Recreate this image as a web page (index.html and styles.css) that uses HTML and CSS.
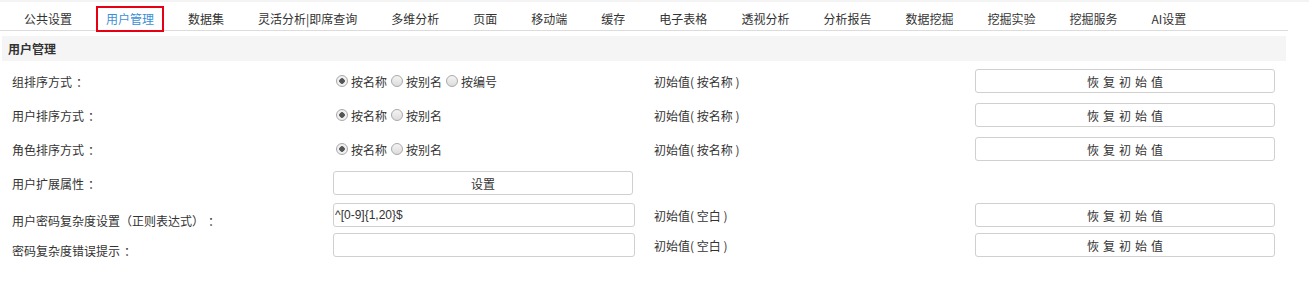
FILE: index.html
```html
<!DOCTYPE html>
<html lang="zh-CN">
<head>
  <meta charset="UTF-8" />
  <title>用户管理</title>
  <link rel="stylesheet" href="styles.css">
</head>
<body>
  <div class="tabs">
    <span class="tab">公共设置</span>
    <span class="tab active">用户管理</span>
    <span class="tab">数据集</span>
    <span class="tab">灵活分析|即席查询</span>
    <span class="tab">多维分析</span>
    <span class="tab">页面</span>
    <span class="tab">移动端</span>
    <span class="tab">缓存</span>
    <span class="tab">电子表格</span>
    <span class="tab">透视分析</span>
    <span class="tab">分析报告</span>
    <span class="tab">数据挖掘</span>
    <span class="tab">挖掘实验</span>
    <span class="tab">挖掘服务</span>
    <span class="tab">AI设置</span>
  </div>

  <div class="section-title">用户管理</div>

  <div class="settings">
    <div class="row">
      <div class="cell label">组排序方式<span class="colon">：</span></div>
      <div class="cell radios">
        <label><input type="radio" name="grp" checked>按名称</label>
        <label><input type="radio" name="grp">按别名</label>
        <label><input type="radio" name="grp">按编号</label>
      </div>
      <div class="cell init">初始值( 按名称 )</div>
      <div class="cell"><button class="btn reset">恢复初始值</button></div>
    </div>

    <div class="row">
      <div class="cell label">用户排序方式<span class="colon">：</span></div>
      <div class="cell radios">
        <label><input type="radio" name="usr" checked>按名称</label>
        <label><input type="radio" name="usr">按别名</label>
      </div>
      <div class="cell init">初始值( 按名称 )</div>
      <div class="cell"><button class="btn reset">恢复初始值</button></div>
    </div>

    <div class="row">
      <div class="cell label">角色排序方式<span class="colon">：</span></div>
      <div class="cell radios">
        <label><input type="radio" name="role" checked>按名称</label>
        <label><input type="radio" name="role">按别名</label>
      </div>
      <div class="cell init">初始值( 按名称 )</div>
      <div class="cell"><button class="btn reset">恢复初始值</button></div>
    </div>

    <div class="row">
      <div class="cell label">用户扩展属性<span class="colon">：</span></div>
      <div class="cell"><button class="btn">设置</button></div>
      <div class="cell init"></div>
      <div class="cell"></div>
    </div>

    <div class="row tight">
      <div class="cell label low">用户密码复杂度设置（正则表达式）<span class="colon">：</span></div>
      <div class="cell"><input class="text" type="text" value="^[0-9]{1,20}$"></div>
      <div class="cell init">初始值( 空白 )</div>
      <div class="cell"><button class="btn reset">恢复初始值</button></div>
    </div>

    <div class="row tight">
      <div class="cell label low">密码复杂度错误提示<span class="colon">：</span></div>
      <div class="cell"><input class="text" type="text" value=""></div>
      <div class="cell init">初始值( 空白 )</div>
      <div class="cell"><button class="btn reset">恢复初始值</button></div>
    </div>
  </div>
</body>
</html>
```

FILE: styles.css
```css
body {
  margin: 0;
  font-family: "Noto Sans CJK SC", "Liberation Sans", sans-serif;
  font-size: 12px;
  color: #333;
  background: #fff;
  border-top: 2px solid #f3f3f3;
  text-spacing-trim: space-all;
}

.tabs {
  display: flex;
  align-items: flex-start;
  width: 1281px;
  height: 28px;
  padding-left: 7px;
  border-bottom: 1px solid #dcdcdc;
}

.tab {
  box-sizing: border-box;
  height: 26px;
  margin: 4px 7px 0;
  padding: 0 8px;
  border: 2px solid transparent;
  line-height: 21px;
  white-space: nowrap;
  color: #333;
}

.tab.active {
  border-color: #e60012;
  color: #3a8fd6;
}

.section-title {
  width: 1278px;
  height: 25px;
  margin: 5px 0 0 2px;
  padding-left: 6px;
  line-height: 25px;
  font-weight: bold;
  background: #f5f5f5;
}

.settings {
  margin: 3px 0 0 12px;
}

.row {
  display: flex;
  align-items: center;
  height: 34px;
}

.row.tight {
  height: 30px;
}

.cell {
  box-sizing: border-box;
  width: 321px;
  flex: none;
}

.label.low {
  padding-top: 10px;
}

/* the original UI font centres the full-width colon */
.colon {
  margin-left: 4px;
}

.radios {
  display: flex;
  align-items: center;
  padding-left: 3px;
}

.radios label {
  display: flex;
  align-items: center;
  margin-right: 4px;
}

.radios input {
  appearance: none;
  -webkit-appearance: none;
  box-sizing: border-box;
  width: 12px;
  height: 12px;
  margin: 0 3px 0 0;
  border: 1px solid #a9a9a9;
  border-radius: 50%;
  background: linear-gradient(#f4f4f4, #dcdcdc);
}

.radios input:checked {
  background: radial-gradient(circle, #555 0 2.5px, #f0f0f0 3px);
}

.btn {
  box-sizing: border-box;
  width: 300px;
  height: 24px;
  padding: 0;
  border: 1px solid #d0d0d0;
  border-radius: 3px;
  background: #fff;
  color: #333;
  font-family: inherit;
  font-size: 12px;
}

.btn.reset {
  letter-spacing: 4px;
  padding-left: 4px;
}

.text {
  box-sizing: border-box;
  width: 302px;
  height: 24px;
  padding: 0 1px;
  border: 1px solid #d0d0d0;
  border-radius: 3px;
  font-family: "Liberation Sans", Arial, sans-serif;
  font-size: 12px;
  color: #333;
  outline: none;
}
```
